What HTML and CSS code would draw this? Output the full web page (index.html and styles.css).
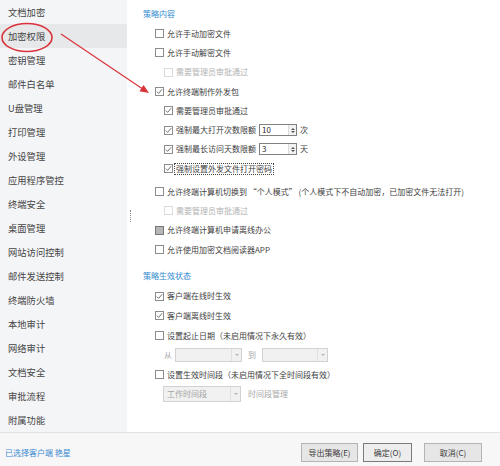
FILE: index.html
```html
<!DOCTYPE html>
<html lang="zh-CN">
<head>
<meta charset="utf-8">
<title>加密权限</title>
<link rel="stylesheet" href="styles.css">
</head>
<body>
<div class="app">
  <div class="main">
    <nav class="sidebar">
      <div class="nav-item">文档加密</div>
      <div class="nav-item active">加密权限</div>
      <div class="nav-item">密钥管理</div>
      <div class="nav-item">邮件白名单</div>
      <div class="nav-item">U盘管理</div>
      <div class="nav-item">打印管理</div>
      <div class="nav-item">外设管理</div>
      <div class="nav-item">应用程序管控</div>
      <div class="nav-item">终端安全</div>
      <div class="nav-item">桌面管理</div>
      <div class="nav-item">网站访问控制</div>
      <div class="nav-item">邮件发送控制</div>
      <div class="nav-item">终端防火墙</div>
      <div class="nav-item">本地审计</div>
      <div class="nav-item">网络审计</div>
      <div class="nav-item">文档安全</div>
      <div class="nav-item">审批流程</div>
      <div class="nav-item">附属功能</div>
    </nav>
    <div class="splitter"><span class="grip"></span></div>
    <section class="content">
      <div class="sec-title">策略内容</div>
      <div class="group g1">
        <div class="row l1"><span class="cb"></span><span class="lbl">允许手动加密文件</span></div>
        <div class="row l1"><span class="cb"></span><span class="lbl">允许手动解密文件</span></div>
        <div class="row l2 disabled"><span class="cb"></span><span class="lbl">需要管理员审批通过</span></div>
        <div class="row l1"><span class="cb checked"><svg viewBox="0 0 9 9"><path d="M1.8 4.6 L3.6 6.4 L7.2 2.2"/></svg></span><span class="lbl">允许终端制作外发包</span></div>
        <div class="row l2"><span class="cb checked"><svg viewBox="0 0 9 9"><path d="M1.8 4.6 L3.6 6.4 L7.2 2.2"/></svg></span><span class="lbl">需要管理员审批通过</span></div>
        <div class="row l2"><span class="cb checked"><svg viewBox="0 0 9 9"><path d="M1.8 4.6 L3.6 6.4 L7.2 2.2"/></svg></span><span class="lbl">强制最大打开次数限额</span>
          <span class="num"><span class="num-val">10</span><span class="spin"><i class="up"></i><i class="down"></i></span></span><span class="unit">次</span></div>
        <div class="row l2"><span class="cb checked"><svg viewBox="0 0 9 9"><path d="M1.8 4.6 L3.6 6.4 L7.2 2.2"/></svg></span><span class="lbl">强制最长访问天数限额</span>
          <span class="num"><span class="num-val">3</span><span class="spin"><i class="up"></i><i class="down"></i></span></span><span class="unit">天</span></div>
        <div class="row l2"><span class="cb checked tight"><svg viewBox="0 0 9 9"><path d="M1.8 4.6 L3.6 6.4 L7.2 2.2"/></svg></span><span class="lbl focus">强制设置外发文件打开密码</span></div>
        <div class="row l1 gap-top"><span class="cb"></span><span class="lbl">允许终端计算机切换到 “个人模式” (个人模式下不自动加密，已加密文件无法打开)</span></div>
        <div class="row l2 disabled"><span class="cb"></span><span class="lbl">需要管理员审批通过</span></div>
        <div class="row l1"><span class="cb mixed"></span><span class="lbl">允许终端计算机申请离线办公</span></div>
        <div class="row l1"><span class="cb"></span><span class="lbl">允许使用加密文档阅读器APP</span></div>
      </div>
      <div class="sec-title second">策略生效状态</div>
      <div class="group g2">
        <div class="row l1"><span class="cb checked"><svg viewBox="0 0 9 9"><path d="M1.8 4.6 L3.6 6.4 L7.2 2.2"/></svg></span><span class="lbl">客户端在线时生效</span></div>
        <div class="row l1"><span class="cb checked"><svg viewBox="0 0 9 9"><path d="M1.8 4.6 L3.6 6.4 L7.2 2.2"/></svg></span><span class="lbl">客户端离线时生效</span></div>
        <div class="row l1"><span class="cb"></span><span class="lbl">设置起止日期（未启用情况下永久有效）</span></div>
        <div class="row l2 dates">
          <span class="muted">从</span>
          <span class="sel sel-from"><span class="sel-val"></span><span class="sel-arr"><i></i></span></span>
          <span class="muted to">到</span>
          <span class="sel sel-to"><span class="sel-val"></span><span class="sel-arr"><i></i></span></span>
        </div>
        <div class="row l1"><span class="cb"></span><span class="lbl">设置生效时间段（未启用情况下全时间段有效）</span></div>
        <div class="row l2 period">
          <span class="sel sel-work"><span class="sel-val">工作时间段</span><span class="sel-arr"><i></i></span></span>
          <span class="muted manage">时间段管理</span>
        </div>
      </div>
    </section>
  </div>
  <footer class="footer">
    <span class="client">已选择客户端 艳星</span>
    <div class="buttons">
      <button class="btn btn-export">导出策略(E)</button>
      <button class="btn btn-ok">确定(O)</button>
      <button class="btn btn-cancel">取消(C)</button>
    </div>
  </footer>
  <svg class="annot" width="500" height="466" viewBox="0 0 500 466">
    <ellipse cx="27" cy="37.5" rx="25" ry="14" fill="none" stroke="#d9333b" stroke-width="1.6"/>
    <line x1="61" y1="34" x2="142" y2="88.5" stroke="#d9333b" stroke-width="1.2"/>
    <polygon points="149,93 139.4,91.2 143.6,84.9" fill="#d9333b"/>
  </svg>
</div>
</body>
</html>
```

FILE: styles.css
```css
* { box-sizing: border-box; }

html, body {
  margin: 0;
  padding: 0;
  background: #ffffff;
}

body {
  font-family: "Noto Sans CJK SC", "Microsoft YaHei", "Noto Sans", sans-serif;
  color: #3d3d3d;
  width: 500px;
  height: 466px;
  overflow: hidden;
}

.app {
  position: relative;
  display: flex;
  flex-direction: column;
  width: 500px;
  height: 466px;
}

.main {
  display: flex;
  height: 432px;
}

/* sidebar */
.sidebar {
  width: 127px;
  flex: none;
  background: #f4f5f7;
  display: flex;
  flex-direction: column;
}

.nav-item {
  height: 24px;
  line-height: 24px;
  padding-left: 8px;
  font-size: 9.3px;
  color: #444444;
  white-space: nowrap;
}

.nav-item.active {
  background: #e7e8ea;
}

.splitter {
  width: 8px;
  flex: none;
  display: flex;
  align-items: center;
  justify-content: center;
}

.grip {
  display: block;
  width: 0;
  height: 12px;
  border-left: 1.5px dotted #8a8a8a;
  margin-left: -1px;
}

/* content */
.content {
  flex: 1;
  padding: 4px 0 0 8px;
  font-size: 8px;
}

.sec-title {
  height: 20px;
  line-height: 20px;
  color: #3089cf;
  font-size: 8px;
}

.sec-title.second {
  margin-top: 6.4px;
}

.row {
  display: flex;
  align-items: center;
  height: 19.3px;
  white-space: nowrap;
  font-size: 8px;
  color: #404040;
}

.g2 {
  margin-top: 1px;
}

.g2 .row {
  height: 19.6px;
}

.row.gap-top {
  margin-top: 3.6px;
}

.l1 { padding-left: 12px; }
.l2 { padding-left: 21px; }

.lbl {
  line-height: 10px;
}

.cb {
  width: 9px;
  height: 9px;
  flex: none;
  border: 1px solid #8c8c8c;
  background: #ffffff;
  margin-right: 3px;
  display: flex;
  align-items: center;
  justify-content: center;
}

.cb svg {
  width: 9px;
  height: 9px;
  flex: none;
}

.cb svg path {
  fill: none;
  stroke: #555555;
  stroke-width: 0.85;
}

.cb.tight {
  margin-right: 1px;
}

.cb.mixed {
  border-color: #777777;
  background: #b6b6b6;
}

.disabled .cb {
  border-color: #dadada;
}

.disabled .lbl {
  color: #b3b3b3;
}

.focus {
  border: 1px dotted #444444;
  padding: 0 1px;
}

/* numeric input */
.num {
  display: flex;
  align-items: stretch;
  width: 38px;
  height: 12px;
  margin-left: 3px;
  border: 1px solid #808080;
  background: #ffffff;
}

.num-val {
  flex: 1;
  padding-left: 2px;
  line-height: 10px;
  color: #2a2a2a;
}

.spin {
  width: 8px;
  display: flex;
  flex-direction: column;
  align-items: center;
  justify-content: center;
  gap: 1px;
  background: #f2f2f2;
  border-left: 1px solid #dcdcdc;
}

.spin i {
  display: block;
  width: 0;
  height: 0;
  border-left: 2px solid transparent;
  border-right: 2px solid transparent;
}

.spin .up { border-bottom: 2.5px solid #555555; }
.spin .down { border-top: 2.5px solid #555555; }

.unit {
  margin-left: 3px;
  line-height: 10px;
}

/* selects */
.muted {
  color: #a8a8a8;
  line-height: 10px;
}

.sel {
  display: flex;
  height: 14px;
  border: 1px solid #d2d2d2;
  background: #f1f1f1;
}

.sel-val {
  flex: 1;
  padding-left: 3px;
  line-height: 12px;
  color: #a4a4a4;
}

.sel-arr {
  width: 10px;
  border-left: 1px solid #e0e0e0;
  display: flex;
  align-items: center;
  justify-content: center;
}

.sel-arr i {
  display: block;
  width: 0;
  height: 0;
  border-left: 2px solid transparent;
  border-right: 2px solid transparent;
  border-top: 2.5px solid #b3b3b3;
}

.dates .sel-from {
  width: 67px;
  margin-left: 3px;
}

.dates .to {
  margin-left: 6px;
}

.dates .sel-to {
  width: 66px;
  margin-left: 6px;
}

.period {
  padding-left: 20px;
}

.sel-work {
  width: 78px;
  height: 16px;
}

.sel-work .sel-val {
  line-height: 14px;
}

.manage {
  margin-left: 7px;
}

/* footer */
.footer {
  height: 34px;
  flex: none;
  border-top: 1px solid #e2e2e2;
  background: #f7f7f7;
  display: flex;
  align-items: center;
  padding: 5px 18px 0 5px;
}

.client {
  color: #3a8ad2;
  font-size: 8px;
}

.buttons {
  margin-left: auto;
  display: flex;
  align-items: center;
}

.btn {
  height: 19px;
  padding: 0;
  font-family: inherit;
  font-size: 8px;
  color: #3a3a3a;
  background: #e6e6e6;
  border: 1px solid #b4b4b4;
  border-radius: 0;
}

.btn-export { width: 57px; }
.btn-ok {
  width: 49px;
  margin-left: 5px;
  background: #ededed;
  border-color: #7b7b7b;
}
.btn-cancel {
  width: 58px;
  margin-left: 12px;
}

/* annotation overlay */
.annot {
  position: absolute;
  left: 0;
  top: 0;
  pointer-events: none;
}
```
